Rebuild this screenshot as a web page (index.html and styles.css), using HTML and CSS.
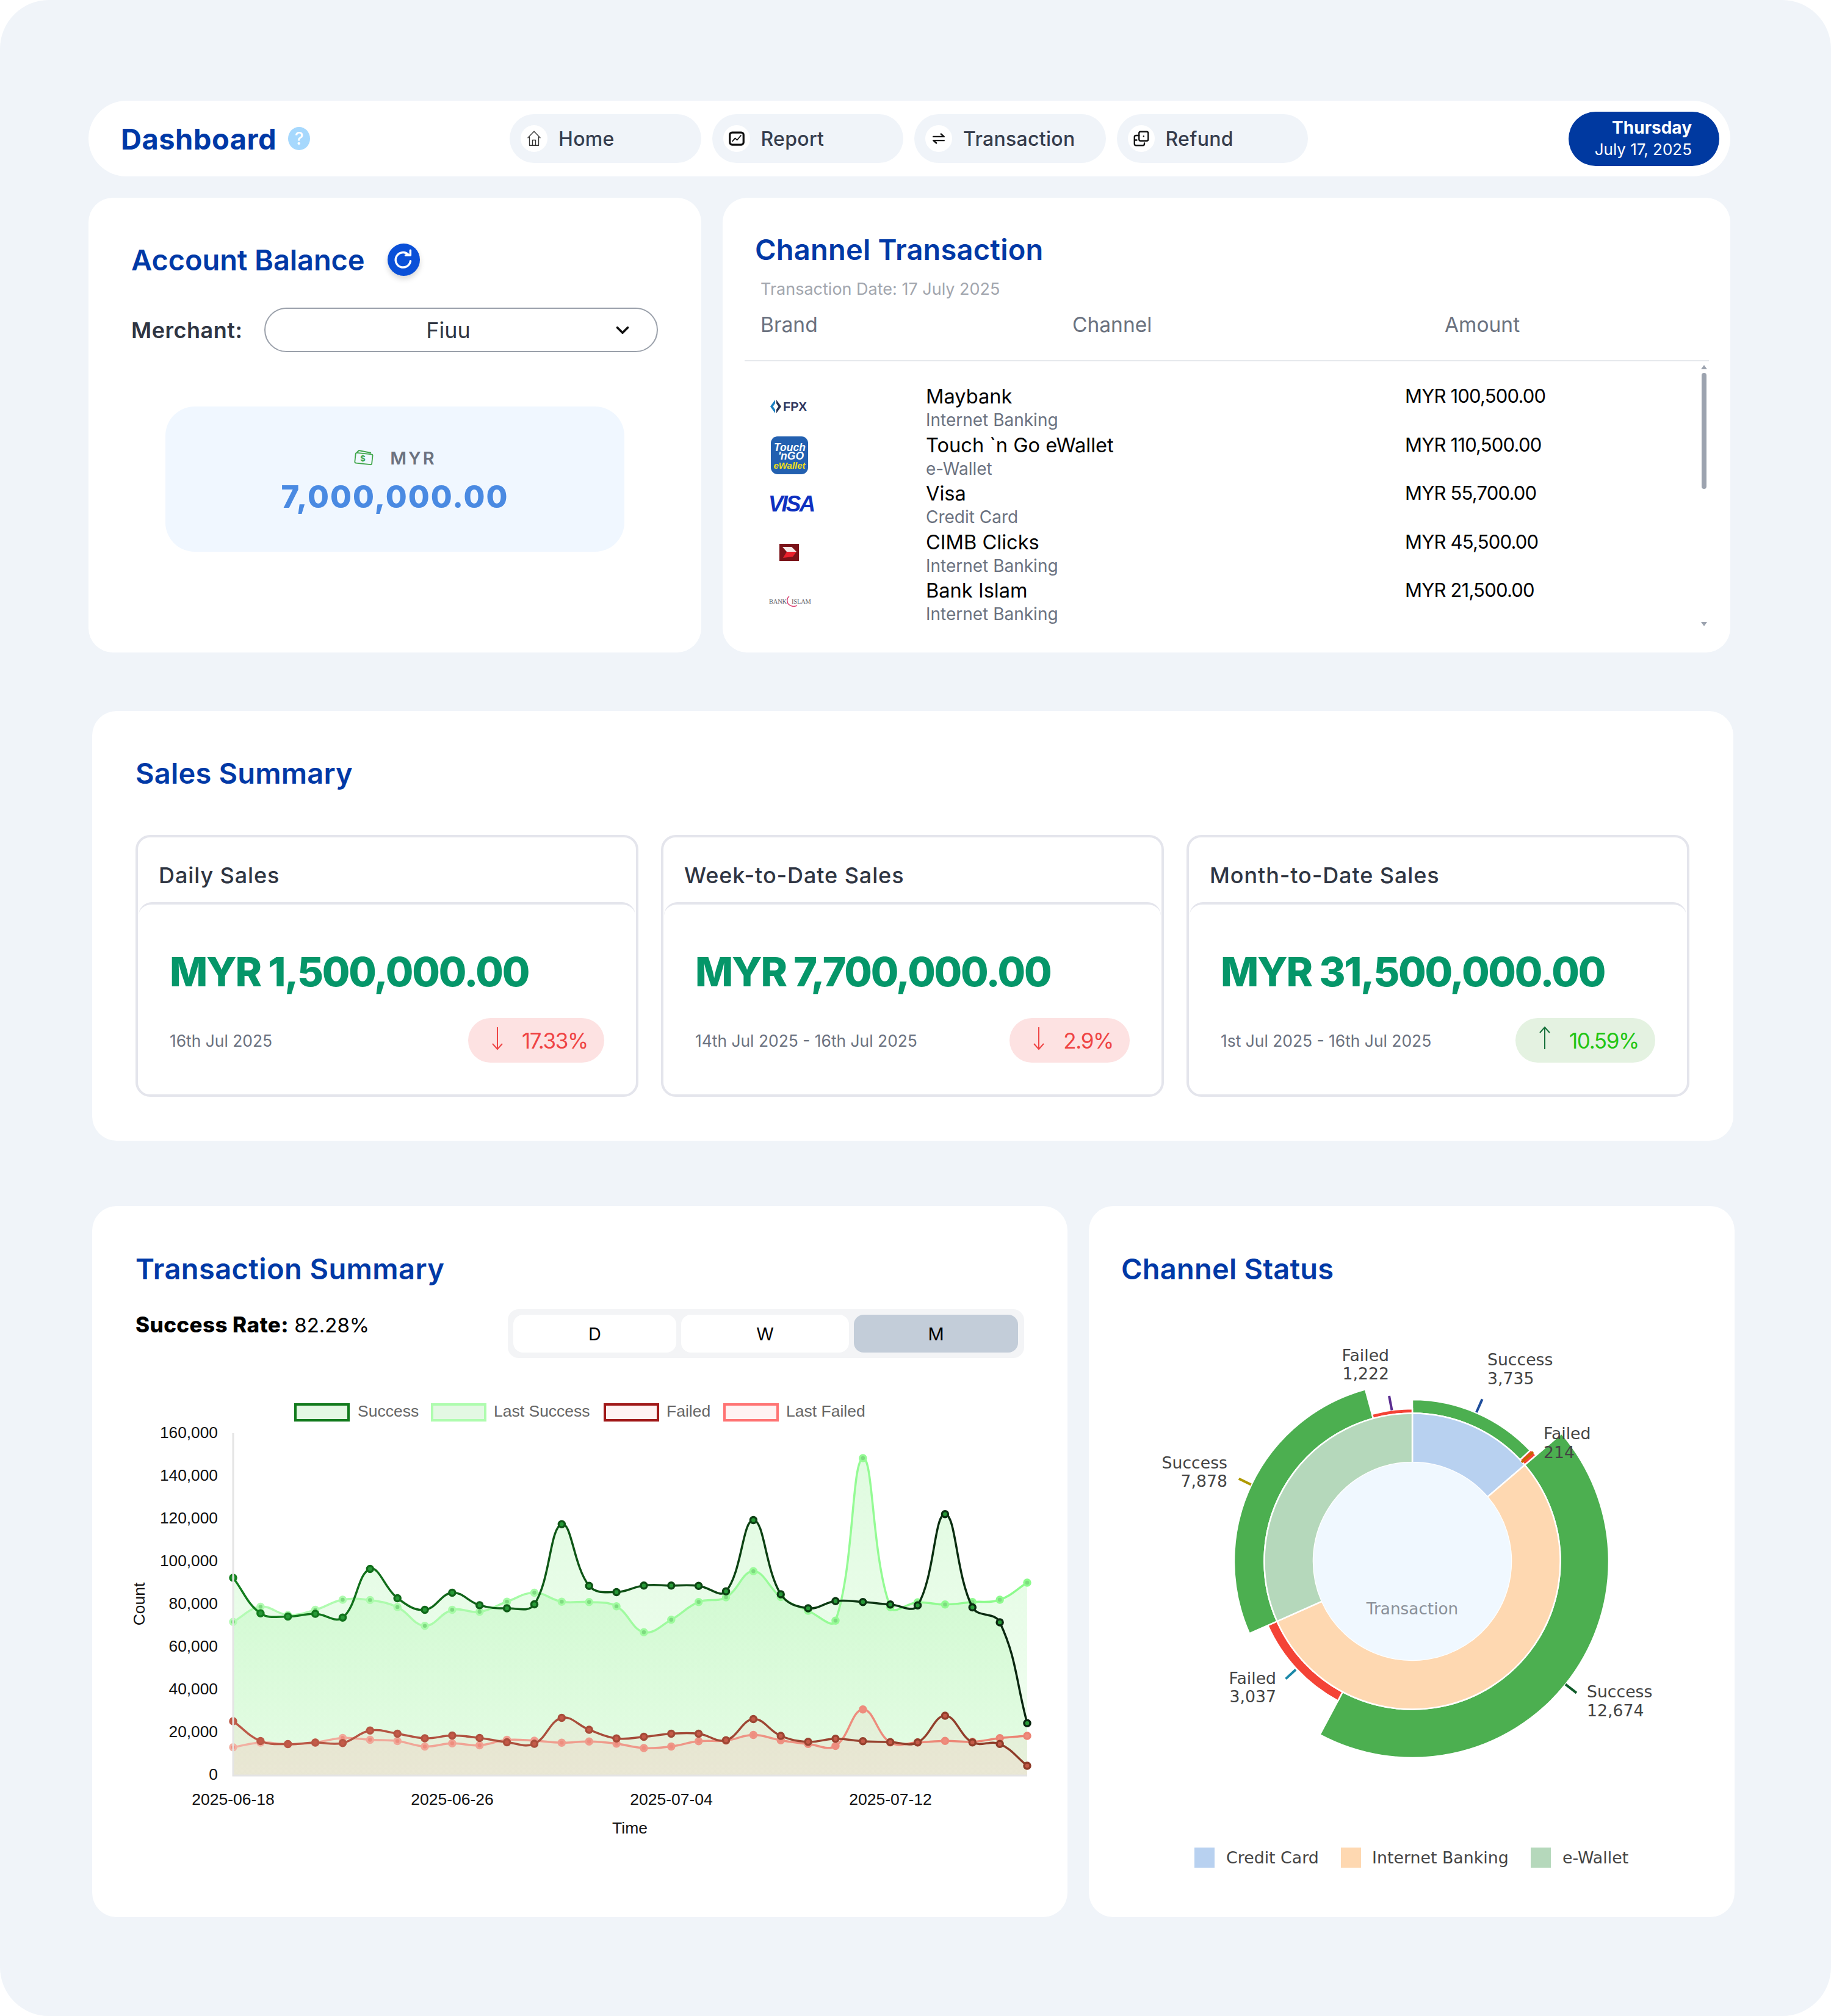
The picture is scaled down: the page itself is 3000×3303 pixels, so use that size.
FILE: index.html
```html
<!DOCTYPE html>
<html lang="en">
<head>
<meta charset="utf-8">
<title>Dashboard</title>
<link rel="stylesheet" href="styles.css">
</head>
<body>
<main class="frame">
  <header class="navbar">
    <div class="brand">
      <span class="brand-title">Dashboard</span>
      <span class="help">?</span>
    </div>
    <nav class="nav">
      <a class="nav-item"><span class="nav-icon"><svg viewBox="0 0 24 24" class="ico thin"><path d="M4 11 12 2.5 20 11M6 9.5V21h12V9.5M10 21v-7h4v7"/></svg></span>Home</a>
      <a class="nav-item"><span class="nav-icon"><svg viewBox="0 0 24 24" class="ico bold"><rect x="3" y="4" width="18" height="16" rx="3"/><path class="fine" d="M6.5 15.5l3.5-4 2.5 2.5 5-6"/></svg></span>Report</a>
      <a class="nav-item"><span class="nav-icon"><svg viewBox="0 0 24 24" class="ico mid"><path d="M5 9.500h14l-4-3.500M19 14.500H5l4 3.500"/></svg></span>Transaction</a>
      <a class="nav-item"><span class="nav-icon"><svg viewBox="0 0 24 24" class="ico mid"><rect x="9" y="3" width="12" height="12" rx="2"/><path d="M9 8H5a2 2 0 0 0-2 2v9a2 2 0 0 0 2 2h9a2 2 0 0 0 2-2v-1M3 14h3M15 9h.1"/></svg></span>Refund</a>
    </nav>
    <div class="date-pill"><strong>Thursday</strong><span>July 17, 2025</span></div>
  </header>

  <div class="top-row">
    <section class="card account">
      <div class="account-head">
        <h2 class="title account-title">Account Balance</h2>
        <button class="refresh"><svg viewBox="0 0 24 24" class="refresh-ico"><path d="M18.600 13a7 7 0 1 1-2.100-6.200M18.500 3v4.500H14"/></svg></button>
      </div>
      <div class="merchant">
        <span class="merchant-label">Merchant:</span>
        <div class="select"><span class="select-text">Fiuu</span><svg viewBox="0 0 24 24" class="chevron"><path d="M6 9l6 6 6-6"/></svg></div>
      </div>
      <div class="balance">
        <div class="currency">
          <svg viewBox="0 0 34 30" class="money"><path d="M5 7 9 3l20 4"/><rect x="3" y="8" width="28" height="17" rx="2" transform="rotate(6 17 16)"/><text x="17" y="21" class="money-sign">$</text></svg>
          <span>MYR</span>
        </div>
        <div class="amount">7,000,000.00</div>
      </div>
    </section>

    <section class="card channel">
      <h2 class="title channel-title">Channel Transaction</h2>
      <p class="tx-date">Transaction Date: 17 July 2025</p>
      <div class="table-head"><span>Brand</span><span>Channel</span><span>Amount</span></div>
      <div class="table-wrap">
        <div class="rows">
          <div class="row">
            <div class="logo"><svg viewBox="0 0 62 22" class="logo-fpx"><polygon class="fpx-a" points="0,11 8,0 8,6 4.500,11 8,16 8,22"/><polygon class="fpx-b" points="10,0 18,11 10,22 10,16 13.500,11 10,6"/><text x="21" y="18" class="fpx-text">FPX</text></svg></div>
            <div class="name">Maybank</div><div class="value">MYR 100,500.00</div>
            <div class="sub">Internet Banking</div>
          </div>
          <div class="row">
            <div class="logo"><svg viewBox="0 0 61 62" class="logo-tng"><rect width="61" height="62" rx="11" class="tng-bg"/><text x="31" y="24" class="tng-a">Touch</text><text x="33" y="38" class="tng-a">'nGO</text><text x="30.500" y="53" class="tng-b">eWallet</text></svg></div>
            <div class="name">Touch `n Go eWallet</div><div class="value">MYR 110,500.00</div>
            <div class="sub">e-Wallet</div>
          </div>
          <div class="row">
            <div class="logo"><svg viewBox="0 0 90 44" class="logo-visa"><text x="45" y="35" class="visa-text">VISA</text></svg></div>
            <div class="name">Visa</div><div class="value">MYR 55,700.00</div>
            <div class="sub">Credit Card</div>
          </div>
          <div class="row">
            <div class="logo"><svg viewBox="0 0 32 28" class="logo-cimb"><rect width="32" height="28" class="cimb-bg"/><polygon class="cimb-w" points="5,5 20,5 28,13 12,13"/><polygon class="cimb-r" points="12,13 28,13 22,21 6,23"/></svg></div>
            <div class="name">CIMB Clicks</div><div class="value">MYR 45,500.00</div>
            <div class="sub">Internet Banking</div>
          </div>
          <div class="row">
            <div class="logo"><svg viewBox="0 0 70 18" class="logo-bi"><text x="0" y="12.500" class="bi-text">BANK</text><path class="bi-arc" d="M33 1a8 8 0 0 0-3 8 8 8 0 0 0 5 7 12 12 0 0 0 11 0"/><text x="37" y="12.500" class="bi-text">ISLAM</text></svg></div>
            <div class="name">Bank Islam</div><div class="value">MYR 21,500.00</div>
            <div class="sub">Internet Banking</div>
          </div>
        </div>
        <div class="scrollbar"><span class="arrow-up"></span><span class="thumb"></span><span class="arrow-down"></span></div>
      </div>
    </section>
  </div>

  <section class="card sales">
    <h2 class="title">Sales Summary</h2>
    <div class="sales-cards">
      <article class="sale">
        <div class="sale-head">Daily Sales</div>
        <div class="sale-body">
          <div class="sale-value">MYR 1,500,000.00</div>
          <div class="sale-foot">
            <span class="sale-date">16th Jul 2025</span>
            <span class="badge down"><svg viewBox="0 0 28 40" class="arr"><path d="M14 2v36M6 29l8 9 8-9"/></svg>17.33%</span>
          </div>
        </div>
      </article>
      <article class="sale">
        <div class="sale-head">Week-to-Date Sales</div>
        <div class="sale-body">
          <div class="sale-value">MYR 7,700,000.00</div>
          <div class="sale-foot">
            <span class="sale-date">14th Jul 2025 - 16th Jul 2025</span>
            <span class="badge down"><svg viewBox="0 0 28 40" class="arr"><path d="M14 2v36M6 29l8 9 8-9"/></svg>2.9%</span>
          </div>
        </div>
      </article>
      <article class="sale">
        <div class="sale-head">Month-to-Date Sales</div>
        <div class="sale-body">
          <div class="sale-value">MYR 31,500,000.00</div>
          <div class="sale-foot">
            <span class="sale-date">1st Jul 2025 - 16th Jul 2025</span>
            <span class="badge up"><svg viewBox="0 0 28 40" class="arr"><path d="M14 38V2M6 11l8-9 8 9"/></svg>10.59%</span>
          </div>
        </div>
      </article>
    </div>
  </section>

  <div class="bottom-row">
    <section class="card trans">
      <div class="trans-head">
        <h2 class="title trans-title">Transaction Summary</h2>
        <div class="trans-bar">
          <p class="rate"><strong>Success Rate:</strong> 82.28%</p>
          <div class="toggle"><button class="tog">D</button><button class="tog">W</button><button class="tog on">M</button></div>
        </div>
      </div>
      <svg id="line-chart" class="chart-line" viewBox="151 2270 1598 800">
        <defs>
          <linearGradient id="g-fill" gradientUnits="userSpaceOnUse" x1="0" y1="2400" x2="0" y2="2900">
            <stop offset="0" class="gf-top"/><stop offset="1" class="gf-bot"/>
          </linearGradient>
          <linearGradient id="g-s" gradientUnits="userSpaceOnUse" x1="382" y1="0" x2="1683" y2="0">
            <stop offset="0" class="s0"/><stop offset="0.55" class="s1"/><stop offset="1" class="s2"/>
          </linearGradient>
          <linearGradient id="g-f" gradientUnits="userSpaceOnUse" x1="382" y1="0" x2="1683" y2="0">
            <stop offset="0" class="f0"/><stop offset="1" class="f1"/>
          </linearGradient>
          <linearGradient id="g-ls" gradientUnits="userSpaceOnUse" x1="382" y1="0" x2="1683" y2="0">
            <stop offset="0" class="ls0"/><stop offset="1" class="ls1"/>
          </linearGradient>
          <linearGradient id="g-lf" gradientUnits="userSpaceOnUse" x1="382" y1="0" x2="1683" y2="0">
            <stop offset="0" class="lf0"/><stop offset="1" class="lf1"/>
          </linearGradient>
        </defs>
        <g id="line-layers"></g>
        <path class="axis" d="M382 2348V2909H1683"/>
        <rect x="484" y="2301" width="87" height="26" class="lg lg-s"/><text x="586" y="2312" class="legend">Success</text>
        <rect x="708" y="2301" width="87" height="26" class="lg lg-ls"/><text x="809" y="2312" class="legend">Last Success</text>
        <rect x="991" y="2301" width="87" height="26" class="lg lg-f"/><text x="1092" y="2312" class="legend">Failed</text>
        <rect x="1187" y="2301" width="87" height="26" class="lg lg-lf"/><text x="1288" y="2312" class="legend">Last Failed</text>
        <g class="ytick">
          <text x="357" y="2347">160,000</text><text x="357" y="2417">140,000</text><text x="357" y="2487">120,000</text>
          <text x="357" y="2557">100,000</text><text x="357" y="2627">80,000</text><text x="357" y="2697">60,000</text>
          <text x="357" y="2767">40,000</text><text x="357" y="2837">20,000</text><text x="357" y="2907">0</text>
        </g>
        <g class="xtick">
          <text x="382" y="2948">2025-06-18</text><text x="741" y="2948">2025-06-26</text>
          <text x="1100" y="2948">2025-07-04</text><text x="1459" y="2948">2025-07-12</text>
          <text x="1032" y="2995">Time</text>
          <text x="228" y="2628" transform="rotate(-90 228 2628)">Count</text>
        </g>
      </svg>
    </section>

    <section class="card status">
      <h2 class="title status-title">Channel Status</h2>
      <svg id="sunburst" class="chart-sun" viewBox="1784 2170 1058 950">
        <g id="sun-layers"></g>
        <text x="2314" y="2636" class="sun-center">Transaction</text>
        <g class="sun-label">
          <text x="2276" y="2220" class="end">Failed</text><text x="2276" y="2250" class="end">1,222</text>
          <text x="2437" y="2227">Success</text><text x="2437" y="2258">3,735</text>
          <text x="2529" y="2348">Failed</text><text x="2529" y="2379">214</text>
          <text x="2011" y="2396" class="end">Success</text><text x="2011" y="2426" class="end">7,878</text>
          <text x="2091" y="2749" class="end">Failed</text><text x="2091" y="2779" class="end">3,037</text>
          <text x="2600" y="2771">Success</text><text x="2600" y="2802">12,674</text>
        </g>
        <path class="tk tk1" d="M2276 2287l4.500 23.500"/>
        <path class="tk tk2" d="M2428.600 2292.400 2419 2314"/>
        <path class="tk tk3" d="M2493 2395.500 2512 2379"/>
        <path class="tk tk4" d="M2029.700 2422.700 2049.800 2432.400"/>
        <path class="tk tk5" d="M2106.600 2750.600 2123 2735.500"/>
        <path class="tk tk6" d="M2565 2759.700 2583 2773.600"/>
        <rect x="1957" y="3027" width="33" height="33" class="k k-cc"/><text x="2009" y="3043" class="sun-legend">Credit Card</text>
        <rect x="2197" y="3027" width="33" height="33" class="k k-ib"/><text x="2248" y="3043" class="sun-legend">Internet Banking</text>
        <rect x="2508" y="3027" width="33" height="33" class="k k-ew"/><text x="2560" y="3043" class="sun-legend">e-Wallet</text>
      </svg>
    </section>
  </div>
</main>
<script src="chart.js"></script>
</body>
</html>
```

FILE: styles.css
```css
* { box-sizing: border-box; }
html, body { margin: 0; padding: 0; background: #fff; }
body { font-family: Inter, "Noto Sans", sans-serif; color: #111; width: 3000px; }
h2, p { margin: 0; }
button { font: inherit; border: 0; padding: 0; }

.frame {
  width: 3000px; height: 3303px; padding-top: 165px;
  background: #f0f4f9; border-radius: 80px;
}
.card { background: #fff; border-radius: 40px; }
.title { font-size: 47px; line-height: 60px; font-weight: 600; color: #0039a6; letter-spacing: .2px; }

/* nav */
.navbar {
  display: flex; align-items: center; width: 2690px; height: 124px; margin-left: 145px;
  padding-left: 53px; background: #fff; border-radius: 62px;
}
.brand { display: flex; align-items: center; gap: 19px; width: 637px; }
.brand-title { font-size: 47px; font-weight: 700; color: #0039a6; letter-spacing: .5px; }
.help {
  width: 36px; height: 38px; border-radius: 50%; background: #a6d8fd; color: #fff;
  display: flex; align-items: center; justify-content: center; font-size: 28px; font-weight: 500;
}
.nav { display: flex; gap: 18px; }
.nav-item {
  display: flex; align-items: center; gap: 18px; width: 313.500px; height: 80px; padding-left: 18px;
  background: #f0f4f9; border-radius: 40px; font-size: 32px; font-weight: 500; color: #363d4d; letter-spacing: .3px;
}
.nav-icon { width: 44px; height: 44px; border-radius: 50%; background: #fff; display: flex; align-items: center; justify-content: center; }
.ico { width: 30px; height: 30px; fill: none; stroke: #111; stroke-linecap: round; stroke-linejoin: round; }
.ico.thin { stroke-width: 1.100; stroke: #333; }
.ico.bold { stroke-width: 2.600; }
.ico.bold .fine { stroke-width: 1.400; }
.ico.mid { stroke-width: 1.900; }
.date-pill {
  margin-left: auto; margin-right: 18px; width: 247px; height: 89px; padding-right: 45px;
  display: flex; flex-direction: column; justify-content: center; align-items: flex-end;
  background: #0039a0; color: #fff; border-radius: 45px; font-size: 26px; line-height: 36px;
}
.date-pill strong { font-size: 28px; font-weight: 700; }

/* top */
.top-row { display: flex; gap: 35px; margin: 35px 0 0 145px; width: 2690px; height: 745px; }
.account { width: 1004px; padding: 75px 0 0 70px; }
.account-head { display: flex; align-items: center; gap: 37px; height: 53px; }
.account-title { letter-spacing: -.1px; }
.refresh {
  width: 53px; height: 53px; border-radius: 50%; background: #0a50d8; display: flex; align-items: center; justify-content: center;
  box-shadow: 0 5px 10px rgba(0, 0, 0, .16);
}
.refresh-ico { width: 42px; height: 42px; fill: none; stroke: #fff; stroke-width: 2; stroke-linecap: round; stroke-linejoin: round; }
.merchant { display: flex; align-items: center; margin-top: 52px; gap: 36px; height: 73px; }
.merchant-label { width: 182px; font-size: 36px; font-weight: 600; color: #2f3542; letter-spacing: .5px; white-space: nowrap; }
.select {
  position: relative; width: 645px; height: 73px; border: 2px solid #9aa0aa; border-radius: 37px;
  display: flex; align-items: center; justify-content: center; padding-right: 42px;
  font-size: 36px; color: #2f3542;
}
.chevron { position: absolute; right: 39px; top: 18px; width: 34px; height: 34px; fill: none; stroke: #111; stroke-width: 2.600; stroke-linecap: round; stroke-linejoin: round; }
.balance {
  margin: 89px 0 0 56px; width: 752px; height: 238px; padding-top: 64px;
  display: flex; flex-direction: column; align-items: center;
  background: #f0f7ff; border-radius: 48px;
}
.currency {
  display: flex; align-items: center; gap: 26px; height: 40px; margin-bottom: 12px;
  font-size: 29px; font-weight: 600; letter-spacing: 3px; color: #6b7280;
}
.money { width: 34px; height: 30px; fill: none; stroke: #3fa64b; stroke-width: 1.800; }
.money-sign { font-size: 13px; font-weight: 700; fill: #3fa64b; stroke: none; text-anchor: middle; }
.amount { font-size: 50.600px; line-height: 64px; font-weight: 800; letter-spacing: 2px; color: #4a8ae2; }

.channel { flex: 1; padding: 55px 35px 0 36px; }
.channel-title { margin-left: 17px; }
.tx-date { margin: 17px 0 0 26px; font-size: 27px; line-height: 36px; color: #a2a6ae; }
.table-head {
  display: grid; grid-template-columns: 511px 610px 1fr; margin-top: 20px; padding: 0 0 38px 26px;
  border-bottom: 2px solid #e6e8ec; font-size: 33.500px; line-height: 40px; color: #6b7280;
}
.table-wrap { display: flex; }
.rows { width: 1568px; padding-top: 37px; }
.row {
  display: grid; grid-template-columns: 146px 151px 785px 1fr; grid-template-rows: 40px 39.600px;
}
.logo { grid-row: 1 / span 2; grid-column: 1; display: flex; align-items: center; justify-content: center; padding-bottom: 5px; min-height: 0; }
.name { grid-column: 3; grid-row: 1; font-size: 32.600px; line-height: 40px; color: #000; }
.value { grid-column: 4; grid-row: 1; font-size: 31px; line-height: 40px; color: #000; letter-spacing: -.8px; }
.sub { grid-column: 3; grid-row: 2; font-size: 28px; line-height: 39.600px; color: #6b7280; }
.scrollbar { width: 8px; height: 438px; display: flex; flex-direction: column; align-items: center; padding-top: 6px; }
.arrow-up { border: 5px solid transparent; border-top: 0; border-bottom: 7px solid #9ca3af; }
.thumb { width: 8px; height: 190px; margin-top: 6px; background: #9ca3af; border-radius: 4px; }
.arrow-down { margin-top: auto; margin-bottom: 4px; border: 5px solid transparent; border-bottom: 0; border-top: 7px solid #9ca3af; }

.logo-fpx { width: 62px; height: 22px; }
.fpx-a { fill: #1a7fc1; }
.fpx-b { fill: #26304f; }
.fpx-text { font-size: 20px; font-weight: 700; fill: #2c3560; font-family: "Liberation Sans", sans-serif; }
.logo-tng { width: 61px; height: 62px; }
.tng-bg { fill: #2360b0; }
.tng-a { font-size: 17.500px; font-weight: 700; font-style: italic; fill: #fff; text-anchor: middle; font-family: "Liberation Sans", sans-serif; }
.tng-b { font-size: 15px; font-weight: 700; font-style: italic; fill: #f5e116; text-anchor: middle; font-family: "Liberation Sans", sans-serif; }
.logo-visa { width: 90px; height: 44px; margin-left: 6px; }
.visa-text { font-size: 37px; font-weight: 700; font-style: italic; fill: #0f31c0; text-anchor: middle; font-family: "Liberation Sans", sans-serif; letter-spacing: -3px; }
.logo-cimb { width: 32px; height: 28px; }
.cimb-bg { fill: #7a1218; }
.cimb-w { fill: #f5e8e6; }
.cimb-r { fill: #e8202c; }
.logo-bi { width: 70px; height: 18px; margin-left: 3px; }
.bi-text { font-size: 10.500px; font-family: "Liberation Serif", serif; fill: #5a5a5f; letter-spacing: -.2px; }
.bi-arc { fill: none; stroke: #d9366b; stroke-width: 1.400; }

/* sales */
.sales { width: 2689px; height: 704px; margin: 96px 0 0 151px; padding: 72px 72px 0 71px; }
.sales-cards { display: flex; gap: 37px; margin-top: 71px; }
.sale { flex: 1; height: 429px; border: 4px solid #e4e5ec; border-radius: 24px; }
.sale-head { height: 106px; padding: 42px 0 0 34px; font-size: 36px; line-height: 40px; font-weight: 500; color: #2f3542; letter-spacing: .9px; }
.sale-body { border-top: 4px solid #e4e5ec; border-radius: 22px 22px 0 0; padding: 70px 51px 0 51px; margin: 0 1px; }
.sale-value { font-size: 66px; line-height: 80px; font-weight: 800; color: #059669; letter-spacing: -2.200px; white-space: nowrap; }
.sale-foot { display: flex; align-items: center; justify-content: space-between; margin-top: 36px; }
.sale-date { font-size: 26.400px; color: #6b7280; }
.badge { display: flex; align-items: center; gap: 26px; height: 73px; padding: 0 27px 0 34px; border-radius: 37px; font-size: 35px; letter-spacing: -1.400px; }
.badge.down { background: #fde2e2; color: #ef4444; }
.badge.up { background: #e4f2e1; color: #22c514; }
.arr { width: 28px; height: 40px; fill: none; stroke: #ef4444; stroke-width: 2; margin-bottom: 8px; }
.badge.up .arr { stroke: #15703a; }

/* bottom */
.bottom-row { display: flex; gap: 35px; margin: 107px 0 0 151px; height: 1165px; }
.trans { width: 1598px; }
.trans-head { padding: 73px 71px 0 71px; height: 294px; }
.trans-title { letter-spacing: .4px; }
.trans-bar { display: flex; justify-content: space-between; margin-top: 36px; }
.rate { font-size: 33px; line-height: 50px; color: #000; white-space: nowrap; }
.rate strong { font-size: 35px; font-weight: 800; letter-spacing: .4px; }
.toggle { display: grid; grid-template-columns: 267px 275px 269px; gap: 8px; width: 846px; height: 80px; padding: 9px; background: #f3f4f6; border-radius: 18px; }
.tog { height: 62px; background: #fff; border-radius: 16px; font-size: 29px; color: #000; }
.tog.on { background: #c3cdd9; }
.chart-line { display: block; width: 1598px; height: 800px; }
.axis { fill: none; stroke: #e4e4e4; stroke-width: 3; }
.lg { stroke-width: 4; }
.lg-s { fill: #e3f8e3; stroke: #117a1c; }
.lg-ls { fill: #e3f8e3; stroke: #aefcae; }
.lg-f { fill: #fff3f3; stroke: #a01818; }
.lg-lf { fill: #fff3f3; stroke: #ff7373; }
.legend { font: 26.500px "Liberation Sans", sans-serif; fill: #666; dominant-baseline: central; }
.ytick text { font: 26.300px "Liberation Sans", sans-serif; fill: #111; text-anchor: end; dominant-baseline: central; }
.xtick text { font: 26.500px "Liberation Sans", sans-serif; fill: #111; text-anchor: middle; dominant-baseline: central; }

.gf-top { stop-color: #3ee83e; stop-opacity: .16; }
.gf-bot { stop-color: #3ee83e; stop-opacity: .07; }
.s0 { stop-color: #137f1e; } .s1 { stop-color: #0d4a14; } .s2 { stop-color: #0a2610; }
.f0 { stop-color: #bd5a48; } .f1 { stop-color: #8d3b28; }
.ls0 { stop-color: #b4fbb4; } .ls1 { stop-color: #8cfb8c; }
.lf0 { stop-color: #f2b0a2; } .lf1 { stop-color: #ec8373; }

.area { stroke: none; }
.area-g { fill: url(#g-fill); }
.area-r { fill: rgba(255, 150, 150, .1); }
.ln { fill: none; stroke-width: 3.500; }
.ln-s { stroke: url(#g-s); }
.ln-ls { stroke: url(#g-ls); }
.ln-f { stroke: url(#g-f); }
.ln-lf { stroke: url(#g-lf); }
.pt { stroke-width: 3.500; }
.pt-s { fill: #279a37; stroke: url(#g-s); }
.pt-ls { fill: #7edb80; stroke: url(#g-ls); }
.pt-f { fill: #c45a48; stroke: url(#g-f); }
.pt-lf { fill: #ee8d7e; stroke: url(#g-lf); }

.status { width: 1058px; }
.status-title { padding: 73px 0 0 53px; height: 133px; }
.chart-sun { display: block; margin-top: 61px; width: 1058px; height: 950px; }
.seg { stroke: #fff; stroke-width: 2.500; }
.seg-cc { fill: #b8d1f0; } .seg-ib { fill: #fed8b1; } .seg-ew { fill: #b5d8bb; }
.seg-ok { fill: #4caf50; } .seg-bad { fill: #f44336; }
.hole { fill: #f0f8ff; }
.sun-center { font: 26.300px "DejaVu Sans", sans-serif; fill: #8a9099; text-anchor: middle; dominant-baseline: central; }
.sun-label text { font: 26.700px "DejaVu Sans", sans-serif; fill: #444; dominant-baseline: central; }
.sun-label .end { text-anchor: end; }
.sun-legend { font: 26.800px "DejaVu Sans", sans-serif; fill: #444; dominant-baseline: central; }
.tk { fill: none; stroke-width: 4; }
.tk1 { stroke: #5b2d91; } .tk2 { stroke: #1f4e9c; } .tk3 { stroke: #c86400; }
.tk4 { stroke: #b09a00; } .tk5 { stroke: #1b88a8; } .tk6 { stroke: #0e5a28; }
.k-cc { fill: #b8d1f0; } .k-ib { fill: #fed8b1; } .k-ew { fill: #b5d8bb; }
```

FILE: chart.js
```js
(function () {
  var NS = 'http://www.w3.org/2000/svg';
  function el(parent, name, cls, attrs) {
    var n = document.createElementNS(NS, name);
    n.setAttribute('class', cls);
    for (var k in attrs) n.setAttribute(k, attrs[k]);
    parent.appendChild(n);
    return n;
  }

  /* Line chart: pixel rows of each daily point in the chart's coordinate space. */
  var X0 = 382, DX = 44.862, BASE = 2909;
  var success = [2585, 2643.3, 2648.4, 2644, 2650.3, 2570.6, 2618.4, 2637.6, 2609.5, 2629.9, 2635, 2628.6, 2497.2, 2598.2, 2608.4, 2597.7, 2597.7, 2598.2, 2607.3, 2490.5, 2611.9, 2634.9, 2623.2, 2624.7, 2628.8, 2630.3, 2480.8, 2633.4, 2657.9, 2823.2];
  var lastSuccess = [2657.3, 2632.5, 2645.9, 2637.6, 2621, 2621.6, 2633.1, 2663.7, 2637.6, 2640.8, 2624.2, 2609.5, 2624.2, 2624.7, 2631.8, 2674.2, 2653.8, 2624.7, 2617, 2574.2, 2616.5, 2639, 2655.3, 2389, 2632.9, 2625.2, 2628.8, 2624.7, 2621.1, 2593.1];
  var failed = [2820, 2852.5, 2857.6, 2855, 2855.7, 2835.3, 2840.4, 2848, 2843.6, 2847.4, 2854.4, 2857, 2814.5, 2833.9, 2848.2, 2845.6, 2840.5, 2840.5, 2851.2, 2816.6, 2844, 2853.8, 2848.7, 2852.8, 2854.3, 2854.8, 2811, 2854.8, 2857.3, 2893];
  var lastFailed = [2862.7, 2855, 2857.6, 2855, 2847.4, 2850.6, 2852.5, 2861.4, 2856.3, 2859.5, 2850.6, 2851.9, 2855.3, 2853.3, 2856.8, 2864, 2861.4, 2852.8, 2851.7, 2842.6, 2851.2, 2857.3, 2860.4, 2800.7, 2854.8, 2854.8, 2852.2, 2853.8, 2847.7, 2844.1];

  function spline(ys) {
    var pts = ys.map(function (y, i) { return [X0 + DX * i, y]; });
    var t = 0.4, cps = [];
    pts.forEach(function (p, i) {
      var a = pts[Math.max(i - 1, 0)], b = pts[Math.min(i + 1, pts.length - 1)];
      var d0 = Math.hypot(p[0] - a[0], p[1] - a[1]), d1 = Math.hypot(b[0] - p[0], b[1] - p[1]);
      var s = d0 + d1 || 1, fa = t * d0 / s, fb = t * d1 / s;
      cps.push({
        px: p[0] - fa * (b[0] - a[0]), py: p[1] - fa * (b[1] - a[1]),
        nx: p[0] + fb * (b[0] - a[0]), ny: p[1] + fb * (b[1] - a[1])
      });
    });
    var d = 'M' + pts[0][0] + ' ' + pts[0][1];
    for (var i = 1; i < pts.length; i++) {
      d += 'C' + cps[i - 1].nx + ' ' + cps[i - 1].ny + ' ' + cps[i].px + ' ' + cps[i].py + ' ' + pts[i][0] + ' ' + pts[i][1];
    }
    return d;
  }

  var layers = document.getElementById('line-layers');
  var sets = [
    { ys: lastSuccess, area: 'area-g', key: 'ls' },
    { ys: success, area: 'area-g', key: 's' },
    { ys: lastFailed, area: 'area-r', key: 'lf' },
    { ys: failed, area: 'area-r', key: 'f' }
  ];
  var xEnd = X0 + DX * 29;
  sets.forEach(function (s) {
    el(layers, 'path', 'area ' + s.area, { d: spline(s.ys) + 'L' + xEnd + ' ' + BASE + 'L' + X0 + ' ' + BASE + 'Z' });
  });
  sets.forEach(function (s) {
    el(layers, 'path', 'ln ln-' + s.key, { d: spline(s.ys) });
    s.ys.forEach(function (y, i) {
      el(layers, 'circle', 'pt pt-' + s.key, { cx: X0 + DX * i, cy: y, r: 5 });
    });
  });

  /* Two-ring status chart. Angles are clockwise from the top, sized by the counts. */
  var CX = 2314, CY = 2558, HOLE = 162, RING = 242.5;
  var outer = [
    [3735, 265, 'seg-ok'], [214, 267, 'seg-bad'], [12674, 322, 'seg-ok'],
    [3037, 259, 'seg-bad'], [7878, 292, 'seg-ok'], [1222, 250, 'seg-bad']
  ];
  var inner = [[3949, 'seg-cc'], [15711, 'seg-ib'], [9100, 'seg-ew']];
  var total = 28760;

  function pt(r, deg) {
    var a = (deg - 90) * Math.PI / 180;
    return (CX + r * Math.cos(a)) + ' ' + (CY + r * Math.sin(a));
  }
  function wedge(r0, r1, a0, a1) {
    var large = a1 - a0 > 180 ? 1 : 0;
    return 'M' + pt(r0, a0) + 'L' + pt(r1, a0) + 'A' + r1 + ' ' + r1 + ' 0 ' + large + ' 1 ' + pt(r1, a1) +
      'L' + pt(r0, a1) + 'A' + r0 + ' ' + r0 + ' 0 ' + large + ' 0 ' + pt(r0, a0) + 'Z';
  }
  var sun = document.getElementById('sun-layers');
  var a = 0;
  outer.forEach(function (o) {
    var b = a + o[0] / total * 360;
    el(sun, 'path', 'seg ' + o[2], { d: wedge(RING, o[1], a, b) });
    a = b;
  });
  a = 0;
  inner.forEach(function (o) {
    var b = a + o[0] / total * 360;
    el(sun, 'path', 'seg ' + o[1], { d: wedge(HOLE, RING, a, b) });
    a = b;
  });
  el(sun, 'circle', 'hole', { cx: CX, cy: CY, r: HOLE });
})();
```
